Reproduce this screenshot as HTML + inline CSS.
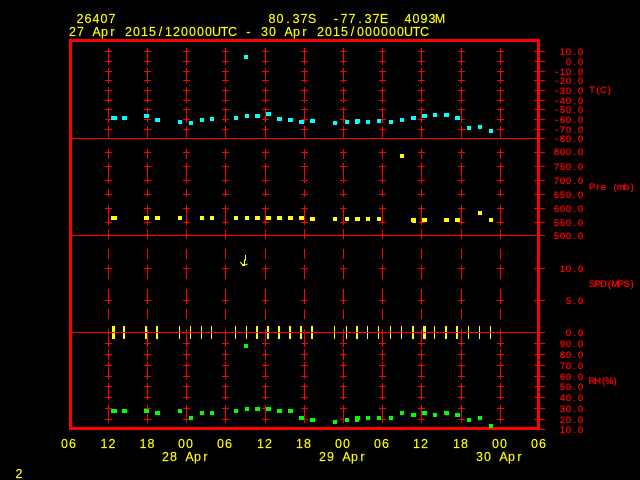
<!DOCTYPE html>
<html><head><meta charset="utf-8"><title>Station 26407</title>
<style>
html,body{margin:0;padding:0;background:#000;width:640px;height:480px;overflow:hidden}
svg{display:block}
text{font-family:"Liberation Sans",sans-serif;white-space:pre;text-anchor:middle}
.y{fill:#ff0;stroke:#ff0;stroke-width:.15px;font-size:12.5px}
.r{fill:#f00;stroke:#f00;stroke-width:.3px;font-size:9.4px}
</style></head><body>
<svg width="640" height="480" viewBox="0 0 640 480" xmlns="http://www.w3.org/2000/svg">
<rect width="640" height="480" fill="#000"/>
<defs>
<path id="g" fill="none" stroke="#f00" stroke-width="1" shape-rendering="crispEdges" d="M.5 48V65M.5 68V83M.5 87V103M.5 107V123M.5 126V138M.5 149V159M.5 163V183M.5 189V197M.5 205V225M.5 229V239M.5 249V259M.5 265V279M.5 289V304M.5 309V319M.5 329V347M.5 349V360M.5 362V379M.5 383V400M.5 405V423
M-3 51.5h7M-3 61.5h7M-3 71.5h7M-3 80.5h7M-3 90.5h7M-3 100.5h7M-3 109.5h7M-3 119.5h7M-3 129.5h7
M-3 152.5h7M-3 166.5h7M-3 180.5h7M-3 194.5h7M-3 208.5h7M-3 222.5h7
M-3 268.5h7M-3 300.5h7
M-3 343.5h7M-3 354.5h7M-3 365.5h7M-3 376.5h7M-3 386.5h7M-3 397.5h7M-3 408.5h7M-3 419.5h7"/>
</defs>
<use href="#g" x="108"/><use href="#g" x="147"/><use href="#g" x="186"/><use href="#g" x="225"/><use href="#g" x="265"/><use href="#g" x="304"/><use href="#g" x="343"/><use href="#g" x="382"/><use href="#g" x="421"/><use href="#g" x="461"/><use href="#g" x="500"/>

<!-- wind bars -->
<g fill="#ff0" shape-rendering="crispEdges">
<rect x="112" y="326" width="3" height="13"/><rect x="123" y="326" width="2" height="13"/><rect x="145" y="326" width="2" height="13"/><rect x="156" y="326" width="2" height="13"/>
<rect x="179" y="326" width="1" height="13"/><rect x="190" y="326" width="1" height="13"/><rect x="201" y="326" width="1" height="13"/><rect x="211" y="326" width="1" height="13"/>
<rect x="235" y="326" width="1" height="13"/><rect x="246" y="326" width="1" height="13"/><rect x="256" y="326" width="2" height="13"/><rect x="267" y="326" width="2" height="13"/>
<rect x="278" y="326" width="2" height="13"/><rect x="289" y="326" width="2" height="13"/><rect x="300" y="326" width="2" height="13"/><rect x="311" y="326" width="2" height="13"/>
<rect x="334" y="326" width="1" height="13"/><rect x="346" y="326" width="1" height="13"/><rect x="356" y="326" width="2" height="13"/><rect x="367" y="326" width="1" height="13"/>
<rect x="378" y="326" width="1" height="13"/><rect x="390" y="326" width="1" height="13"/><rect x="401" y="326" width="1" height="13"/><rect x="412" y="326" width="2" height="13"/>
<rect x="423" y="326" width="3" height="13"/><rect x="434" y="326" width="1" height="13"/><rect x="445" y="326" width="2" height="13"/><rect x="456" y="326" width="2" height="13"/>
<rect x="468" y="326" width="1" height="13"/><rect x="479" y="326" width="1" height="13"/><rect x="490" y="326" width="1" height="13"/>
</g>

<!-- panel separators and right ticks -->
<path fill="none" stroke="#f00" stroke-width="1" shape-rendering="crispEdges" d="M72 138.5H545M72 235.5H545M72 332.5H545
M534 51.5h11M534 61.5h11M534 71.5h11M534 80.5h11M534 90.5h11M534 100.5h11M534 109.5h11M534 119.5h11M534 129.5h11
M534 152.5h11M534 166.5h11M534 180.5h11M534 194.5h11M534 208.5h11M534 222.5h11
M534 268.5h11M534 300.5h11
M534 343.5h11M534 354.5h11M534 365.5h11M534 376.5h11M534 386.5h11M534 397.5h11M534 408.5h11M534 419.5h11M534 429.5h11"/>

<!-- frame -->
<path fill="#f00" shape-rendering="crispEdges" d="M69 39H540V430H69ZM72 42V427H537V42Z" fill-rule="evenodd"/>

<!-- temperature -->
<path fill="none" stroke="#0ff" stroke-width="4" shape-rendering="crispEdges" d="M244 57h4M111 118h6M122 118h5M144 116h5M155 120h5M178 122h4M189 123h4M200 120h4M210 119h4M234 118h4M245 116h4M255 116h5M266 114h5M277 119h5M288 120h5M299 122h5M310 121h5M333 123h4M345 122h4M355 121h5M355 122h4M366 122h4M377 121h4M389 122h4M400 120h4M411 118h5M422 116h5M433 115h4M444 115h5M455 118h5M467 128h4M478 127h4M489 131h4"/>

<!-- pressure -->
<path fill="none" stroke="#ff0" stroke-width="4" shape-rendering="crispEdges" d="M111 218h6M144 218h5M155 218h5M178 218h4M200 218h4M210 218h4M234 218h4M245 218h4M255 218h5M266 218h5M277 218h5M288 218h5M299 218h5M310 219h5M333 219h4M345 219h4M355 219h5M366 219h4M377 219h4M400 156h4M411 220h5M412 221h4M422 220h5M444 220h5M455 220h5M478 213h4M489 220h4"/>

<!-- relative humidity -->
<path fill="none" stroke="#0f0" stroke-width="4" shape-rendering="crispEdges" d="M244 346h4M111 411h6M122 411h5M144 411h5M155 413h5M178 411h4M189 418h4M200 413h4M210 413h4M234 411h4M245 409h4M255 409h5M266 409h5M277 411h5M288 411h5M299 418h5M310 420h5M333 422h4M345 420h4M355 418h5M355 420h4M366 418h4M377 418h4M389 418h4M400 413h4M411 415h5M422 413h5M433 415h4M444 413h5M455 415h5M467 420h4M478 418h4M489 426h4"/>

<!-- wind arrow -->
<path fill="none" stroke="#ff0" stroke-width="1" d="M245.500 255v5L244.500 260v5M240 262l3.500 3.500l4-1.500"/>
<rect x="242" y="264" width="3" height="2" fill="#ff0"/>

<!-- titles -->
<text class="y" x="80 88 96 104 112" y="23">26407</text>
<text class="y" x="272 280 288 296 304 312 320 328 336 344 352 360 368 376 384 392 400 408 416 424 432 440" y="23">80.37S  -77.37E  4093M</text>
<text class="y" x="72.500 80.500 88.500 96.500 104.500 112.500 120.500 128.500 136.500 144.500 152.500 160.500 168.500 176.500 184.500 192.500 200.500 208.500 216.500 224.500 232.500 240.500 248.500 256.500 264.500 272.500 280.500 288.500 296.500 304.500 312.500 320.500 328.500 336.500 344.500 352.500 360.500 368.500 376.500 384.500 392.500 400.500 408.500 416.500 424.500" y="36">27 Apr 2015/120000UTC - 30 Apr 2015/000000UTC</text>

<!-- right axis labels -->
<text class="r" x="562.500 568.500 574.500 580.500" y="55">10.0</text>
<text class="r" x="568.500 574.500 580.500" y="65">0.0</text>
<text class="r" x="556.500 562.500 568.500 574.500 580.500" y="75">-10.0</text>
<text class="r" x="556.500 562.500 568.500 574.500 580.500" y="84">-20.0</text>
<text class="r" x="556.500 562.500 568.500 574.500 580.500" y="94">-30.0</text>
<text class="r" x="556.500 562.500 568.500 574.500 580.500" y="104">-40.0</text>
<text class="r" x="556.500 562.500 568.500 574.500 580.500" y="113">-50.0</text>
<text class="r" x="556.500 562.500 568.500 574.500 580.500" y="123">-60.0</text>
<text class="r" x="556.500 562.500 568.500 574.500 580.500" y="133">-70.0</text>
<text class="r" x="556.500 562.500 568.500 574.500 580.500" y="142">-80.0</text>
<text class="r" x="556.500 562.500 568.500 574.500 580.500" y="155">800.0</text>
<text class="r" x="556.500 562.500 568.500 574.500 580.500" y="170">750.0</text>
<text class="r" x="556.500 562.500 568.500 574.500 580.500" y="184">700.0</text>
<text class="r" x="556.500 562.500 568.500 574.500 580.500" y="198">650.0</text>
<text class="r" x="556.500 562.500 568.500 574.500 580.500" y="212">600.0</text>
<text class="r" x="556.500 562.500 568.500 574.500 580.500" y="226">550.0</text>
<text class="r" x="556.500 562.500 568.500 574.500 580.500" y="239">500.0</text>
<text class="r" x="562.500 568.500 574.500 580.500" y="272">10.0</text>
<text class="r" x="568.500 574.500 580.500" y="304">5.0</text>
<text class="r" x="568.500 574.500 580.500" y="336">0.0</text>
<text class="r" x="562.500 568.500 574.500 580.500" y="347">90.0</text>
<text class="r" x="562.500 568.500 574.500 580.500" y="358">80.0</text>
<text class="r" x="562.500 568.500 574.500 580.500" y="369">70.0</text>
<text class="r" x="562.500 568.500 574.500 580.500" y="380">60.0</text>
<text class="r" x="562.500 568.500 574.500 580.500" y="390">50.0</text>
<text class="r" x="562.500 568.500 574.500 580.500" y="401">40.0</text>
<text class="r" x="562.500 568.500 574.500 580.500" y="412">30.0</text>
<text class="r" x="562.500 568.500 574.500 580.500" y="423">20.0</text>
<text class="r" x="562.500 568.500 574.500 580.500" y="433">10.0</text>
<text class="r" x="592 597.750 603.500 609.250" y="93">T(C)</text>
<text class="r" x="592 597.750 603.500 609.250 615 620.750 626.500 632.250" y="190">Pre (mb)</text>
<text class="r" x="592 597.750 603.500 609.250 615 620.750 626.500 632.250" y="287">SPD(MPS)</text>
<text class="r" x="592 597.750 603.500 609.250 615" y="384">RH(%)</text>

<!-- time axis -->
<text class="y" x="64.500 72.500" y="448">06</text>
<text class="y" x="104 112" y="448">12</text>
<text class="y" x="143 151" y="448">18</text>
<text class="y" x="181.500 189.500" y="448">00</text>
<text class="y" x="220.500 228.500" y="448">06</text>
<text class="y" x="260.500 268.500" y="448">12</text>
<text class="y" x="299.500 307.500" y="448">18</text>
<text class="y" x="338.500 346.500" y="448">00</text>
<text class="y" x="377.500 385.500" y="448">06</text>
<text class="y" x="416.500 424.500" y="448">12</text>
<text class="y" x="456.500 464.500" y="448">18</text>
<text class="y" x="495.500 503.500" y="448">00</text>
<text class="y" x="534.500 542.500" y="448">06</text>
<text class="y" x="165.500 173.500 181.500 189.500 197.500 205.500" y="461">28 Apr</text>
<text class="y" x="322.500 330.500 338.500 346.500 354.500 362.500" y="461">29 Apr</text>
<text class="y" x="479.500 487.500 495.500 503.500 511.500 519.500" y="461">30 Apr</text>
<text class="y" x="19" y="478">2</text>
</svg>
</body></html>
